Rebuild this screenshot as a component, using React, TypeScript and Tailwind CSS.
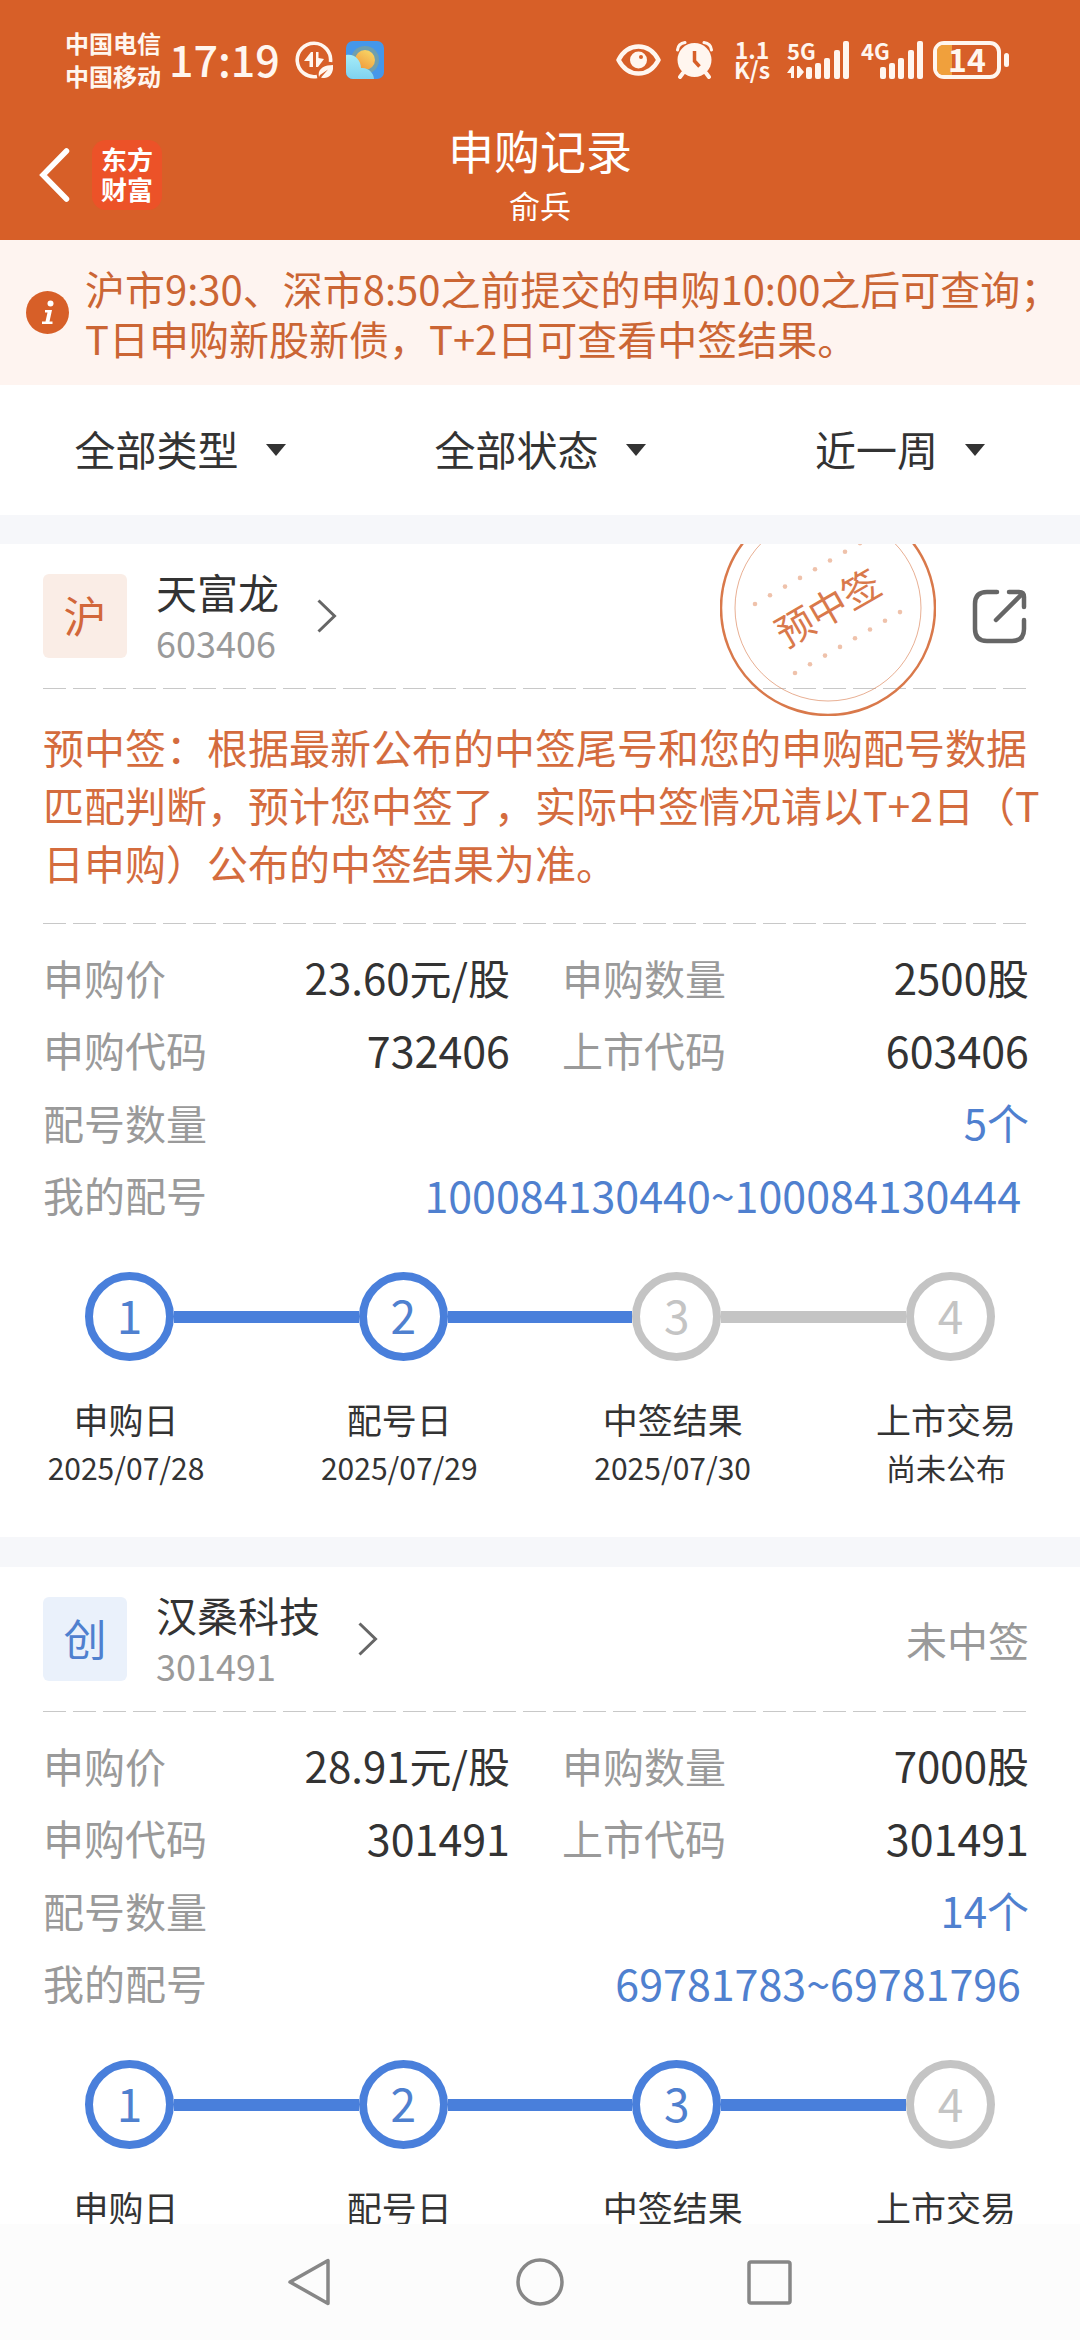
import type { ReactNode } from "react";

type Step = { label: string; date?: string; done: boolean };

type Record = {
  market: string;
  badgeClass: string;
  name: string;
  code: string;
  price: string;
  amount: string;
  applyCode: string;
  listCode: string;
  count: string;
  numbers: string;
  steps: Step[];
};

const tianfulong: Record = {
  market: "沪",
  badgeClass: "bg-[#faede6] text-[#d2673a]",
  name: "天富龙",
  code: "603406",
  price: "23.60元/股",
  amount: "2500股",
  applyCode: "732406",
  listCode: "603406",
  count: "5个",
  numbers: "100084130440~100084130444",
  steps: [
    { label: "申购日", date: "2025/07/28", done: true },
    { label: "配号日", date: "2025/07/29", done: true },
    { label: "中签结果", date: "2025/07/30", done: false },
    { label: "上市交易", date: "尚未公布", done: false },
  ],
};

const hansang: Record = {
  market: "创",
  badgeClass: "bg-[#eaf1fb] text-[#4f80cf]",
  name: "汉桑科技",
  code: "301491",
  price: "28.91元/股",
  amount: "7000股",
  applyCode: "301491",
  listCode: "301491",
  count: "14个",
  numbers: "69781783~69781796",
  steps: [
    { label: "申购日", done: true },
    { label: "配号日", done: true },
    { label: "中签结果", done: true },
    { label: "上市交易", done: false },
  ],
};

function Signal({ name, arrows }: { name: string; arrows?: boolean }) {
  return (
    <div className="relative h-[38px] w-[63px]">
      <span className="absolute -top-1 left-0 text-[22px] leading-[26px] font-bold">{name}</span>
      <svg className="h-[38px] w-[63px]" viewBox="0 0 63 38" fill="currentColor">
        <rect x="19" y="26" width="6" height="12" rx="2" />
        <rect x="28" y="22" width="6" height="16" rx="2" />
        <rect x="37" y="17" width="6" height="21" rx="2" />
        <rect x="47" y="9" width="6" height="29" rx="2" />
        <rect x="56" y="0" width="6" height="38" rx="2" />
        {arrows && <path d="M0 32L5 25H7V37H4V32ZM10 25H12L17 31L12 37H10Z" />}
      </svg>
    </div>
  );
}

function StatusBar() {
  return (
    <div className="flex h-30 items-center justify-between pr-[71px] pl-[65px] text-[#fff6ef]">
      <div className="flex items-center">
        <div className="pb-[3px] text-[24px] leading-[33px] font-bold">
          <div>中国电信</div>
          <div>中国移动</div>
        </div>
        <span className="ml-2 pb-1 text-[43px] leading-[48px] font-medium">17:19</span>
        {/* Data saver */}
        <svg className="ml-[15px] h-[38px] w-[38px]" viewBox="0 0 38 38" fill="none">
          <path d="M35.5 21A16.7 16.7 0 1 0 22 35.4" stroke="currentColor" strokeWidth="3.6" />
          <path d="M9 20L16 11H18V26H14.500V20ZM21 11H23.500V17L29 18L23 26H21Z" fill="currentColor" />
          <path d="M24 36C22 28 29 24 38 24C39 32 34 39 26 36.500L33 28.500L25 34Z" fill="currentColor" />
        </svg>
        {/* Weather */}
        <svg className="ml-[13px] h-[38px] w-[38px]" viewBox="0 0 38 38">
          <defs>
            <clipPath id="weather">
              <rect width="38" height="38" rx="7" />
            </clipPath>
            <linearGradient id="sun" x1="0.8" y1="0" x2="0.2" y2="1">
              <stop offset="0" stopColor="#f8d867" />
              <stop offset="1" stopColor="#f0963a" />
            </linearGradient>
            <linearGradient id="cloud" x1="0" y1="0" x2="0" y2="1">
              <stop offset="0" stopColor="#a5ecf8" />
              <stop offset="1" stopColor="#7fd2ef" />
            </linearGradient>
          </defs>
          <g clipPath="url(#weather)">
            <rect width="38" height="38" fill="#4597ea" />
            <circle cx="19" cy="19" r="14" fill="#6f9fae" />
            <circle cx="19" cy="19" r="10" fill="url(#sun)" />
            <path d="M0 14C8 12 15 19 15 27C22 26 28 32 28 38H0Z" fill="url(#cloud)" />
          </g>
        </svg>
      </div>

      <div className="flex items-center">
        {/* Eye comfort */}
        <svg className="h-[32px] w-[45px]" viewBox="0 0 45 32" fill="none">
          <path d="M2.500 16C12 -2 33 -2 42.500 16C33 34 12 34 2.500 16Z" stroke="currentColor" strokeWidth="4.500" strokeLinejoin="round" />
          <circle cx="22.500" cy="16" r="8.500" fill="currentColor" />
          <circle cx="25" cy="13" r="2" fill="#d75f28" />
        </svg>
        {/* Alarm */}
        <svg className="ml-[15px] h-[38px] w-[37px]" viewBox="0 0 37 38" fill="none" stroke="currentColor">
          <circle cx="18.500" cy="19" r="17" fill="currentColor" stroke="none" />
          <path d="M1.500 9C2 4 5 2 9 1.500M35.500 9C35 4 32 2 28 1.500" strokeWidth="3" strokeLinecap="round" />
          <path d="M7 32L4 36M30 32L33 36" strokeWidth="4" strokeLinecap="round" />
          <path d="M18.500 10V20L23.500 25.500" stroke="#d75f28" strokeWidth="3.500" />
        </svg>
        <div className="ml-[19px] w-[40px] pb-[3px] text-center text-[23px] leading-[20px] font-bold">
          <div>1.1</div>
          <div>K/s</div>
        </div>
        <div className="ml-[15px] flex gap-[11px]">
          <Signal name="5G" arrows />
          <Signal name="4G" />
        </div>
        {/* Battery */}
        <div className="ml-[9px] flex items-center gap-[3px]">
          <div className="relative h-[38px] w-[68px] rounded-[11px] border-4 border-current">
            <div className="h-full w-[15px] rounded-l-md bg-[#f0a03c]"></div>
            <span className="absolute inset-x-0 -top-[10px] text-center text-[32px] leading-[46px] font-bold">14</span>
          </div>
          <div className="h-[14px] w-[5px] rounded-sm bg-current"></div>
        </div>
      </div>
    </div>
  );
}

function TitleBar() {
  return (
    <div className="relative flex h-30 flex-col items-center text-white">
      <h1 className="text-[46px] leading-[58px]">申购记录</h1>
      <div className="text-[31px] leading-[54px]">俞兵</div>
      <div className="absolute inset-y-0 left-[39px] flex items-center gap-[22px] pb-[10px]">
        <button type="button" aria-label="返回">
          <svg className="h-[54px] w-[31px]" viewBox="0 0 31 54" fill="none" stroke="currentColor" strokeWidth="5.500" strokeLinecap="round">
            <path d="M27.500 3L4 27L27.500 51" />
          </svg>
        </button>
        <div className="flex h-[70px] w-[70px] flex-col items-center justify-center rounded-[14px] bg-[#ec5228] pb-[3px] text-[26px] leading-[30px] font-bold">
          <span>东方</span>
          <span>财富</span>
        </div>
      </div>
    </div>
  );
}

function Notice() {
  return (
    <div className="flex h-[145px] shrink-0 items-center bg-[#fef4f0] pl-[26px] text-[#cb6534]">
      <svg className="h-[43px] w-[43px] shrink-0" viewBox="0 0 43 43">
        <circle cx="21.500" cy="21.500" r="21.500" fill="#d75f28" />
        <circle cx="24.500" cy="12.500" r="3" fill="#fff" />
        <path d="M19 19H26L23.500 30.500H26.500V33H16V30.500H19.500L21.500 21.500H19Z" fill="#fff" />
      </svg>
      <p className="ml-4 text-[40px] leading-[50px]">
        沪市9:30、深市8:50之前提交的申购10:00之后可查询；
        <br />
        T日申购新股新债，T+2日可查看中签结果。
      </p>
    </div>
  );
}

function Filter({ id, label }: { id: string; label: string }) {
  return (
    <div className="flex items-center justify-center gap-[27px]">
      <select id={id} aria-label={label} className="appearance-none bg-transparent pb-1 text-[41px] leading-[60px] outline-none">
        <option>{label}</option>
      </select>
      <svg className="h-3 w-5" viewBox="0 0 20 12" fill="currentColor">
        <path d="M0 0H20L10 12Z" />
      </svg>
    </div>
  );
}

function Divider() {
  return <div className="h-px bg-[repeating-linear-gradient(90deg,#c8c8c8_0_23px,transparent_23px_30px)]"></div>;
}

function Stamp() {
  const dots = [0, 1, 2, 3, 4, 5, 6, 7];
  return (
    <div className="pointer-events-none absolute -top-[44px] right-[144px] flex h-[216px] w-[216px] items-center justify-center text-[#d9794b]">
      <svg className="absolute inset-0" viewBox="0 0 216 216" fill="none" stroke="currentColor">
        <circle cx="108" cy="108" r="107" strokeWidth="2.500" />
        <circle cx="108" cy="108" r="93" strokeWidth="1" opacity="0.6" />
        {dots.map((i) => (
          <g key={i} fill="#efc2ab" stroke="none">
            <circle cx={35 + i * 15} cy={104 - i * 8.7} r="2.300" />
            <circle cx={75 + i * 15} cy={173 - i * 8.7} r="2.300" />
          </g>
        ))}
      </svg>
      <span className="-rotate-30 pb-1 text-[38px] leading-[44px]">预中签</span>
    </div>
  );
}

function Row({ label, children }: { label: string; children: ReactNode }) {
  return (
    <div className="flex justify-between">
      <dt className="text-[41px] text-[#9a9a9a]">{label}</dt>
      <dd className="text-[42px]">{children}</dd>
    </div>
  );
}

function Steps({ steps }: { steps: Step[] }) {
  return (
    <div className="mt-[41px]">
      <div className="flex items-center pr-[34px] pl-[42px]">
        {steps.map((step, i) => (
          <div key={step.label} className={i > 0 ? "flex flex-1 items-center" : "flex items-center"}>
            {i > 0 && <div className={`h-3 flex-1 ${steps[i - 1].done ? "bg-[#497fdb]" : "bg-[#c4c4c4]"}`}></div>}
            <div
              className={`flex h-[89px] w-[89px] items-center justify-center rounded-full border-8 pb-[5px] text-[46px] leading-[64px] ${
                step.done ? "border-[#497fdb] text-[#4f80cf]" : "border-[#c4c4c4] text-[#c4c4c4]"
              }`}
            >
              {i + 1}
            </div>
          </div>
        ))}
      </div>
      <div className="mt-[33px] flex justify-between">
        {steps.map((step) => (
          <div key={step.label} className="w-[166px] text-center">
            <div className="text-[35px] leading-[50px]">{step.label}</div>
            <div className="text-[30px] leading-[46px]">{step.date}</div>
          </div>
        ))}
      </div>
    </div>
  );
}

function Card({ record, status, note }: { record: Record; status: ReactNode; note?: ReactNode }) {
  return (
    <section className="relative shrink-0 overflow-hidden bg-white pr-[51px] pb-[47px] pl-[43px]">
      <div className="flex h-36 items-center">
        <span className={`flex h-[84px] w-[84px] items-center justify-center rounded-md pb-1 text-[43px] leading-[60px] ${record.badgeClass}`}>
          {record.market}
        </span>
        <a href="#" className="ml-[29px] flex items-center">
          <div>
            <div className="text-[41px] leading-[52px]">{record.name}</div>
            <div className="text-[36px] leading-[50px] text-[#9a9a9a]">{record.code}</div>
          </div>
          <svg className="ml-[38px] h-[34px] w-[20px]" viewBox="0 0 20 34" fill="none" stroke="#666" strokeWidth="3">
            <path d="M1.500 1.500L17.500 17L1.500 32.500" />
          </svg>
        </a>
        <div className="ml-auto">{status}</div>
      </div>
      <Divider />
      {note}
      <dl className="grid grid-cols-2 gap-x-[52px] pt-[17px] leading-[72px]">
        <Row label="申购价">{record.price}</Row>
        <Row label="申购数量">{record.amount}</Row>
        <Row label="申购代码">
          <span className="text-[43px]">{record.applyCode}</span>
        </Row>
        <Row label="上市代码">
          <span className="text-[43px]">{record.listCode}</span>
        </Row>
        <div className="col-span-2 text-[#4f80cf]">
          <Row label="配号数量">{record.count}</Row>
          <Row label="我的配号">
            <span className="pr-2 text-[43px]">{record.numbers}</span>
          </Row>
        </div>
      </dl>
      <Steps steps={record.steps} />
    </section>
  );
}

export default function App() {
  return (
    <div className="flex h-screen flex-col overflow-hidden bg-[#f6f7fa] font-['Noto_Sans_CJK_SC',sans-serif] text-[#333]">
      <header className="shrink-0 bg-[#d75f28]">
        <StatusBar />
        <TitleBar />
      </header>

      <main className="flex min-h-0 flex-1 flex-col overflow-hidden">
        <Notice />
        <div className="grid h-[130px] shrink-0 grid-cols-3 bg-white">
          <Filter id="type" label="全部类型" />
          <Filter id="state" label="全部状态" />
          <Filter id="range" label="近一周" />
        </div>

        <div className="mt-[29px] flex flex-col gap-[30px]">
          <Card
            record={tianfulong}
            status={
              <>
                <Stamp />
                <button type="button" aria-label="分享" className="block pr-[2px]">
                  <svg className="h-[55px] w-[55px]" viewBox="0 0 55 55" fill="none" stroke="#666" strokeWidth="4.500" strokeLinecap="round" strokeLinejoin="round">
                    <path d="M25 3H15Q3 3 3 15V40Q3 52 15 52H40Q52 52 52 40V31" />
                    <path d="M37 3H47Q52 3 52 8V18M50 5L24 31" />
                  </svg>
                </button>
              </>
            }
            note={
              <>
                <p className="-mr-4 pt-[28px] pb-[32px] text-[41px] leading-[58px] text-[#d46c3e]">
                  预中签：根据最新公布的中签尾号和您的申购配号数据匹配判断，预计您中签了，实际中签情况请以T+2日（T日申购）公布的中签结果为准。
                </p>
                <Divider />
              </>
            }
          />
          <Card record={hansang} status={<span className="text-[41px] leading-[60px] text-[#9a9a9a]">未中签</span>} />
        </div>
      </main>

      {/* System navigation */}
      <nav className="flex h-[116px] shrink-0 items-center justify-center gap-[182px] bg-[#fcfcfc] text-[#878787]">
        <button type="button" aria-label="后退">
          <svg className="h-12 w-12" viewBox="0 0 48 48" fill="none" stroke="currentColor" strokeWidth="3.500" strokeLinejoin="round">
            <path d="M42 2.500V45.500L4 24Z" />
          </svg>
        </button>
        <button type="button" aria-label="主页">
          <svg className="h-12 w-12" viewBox="0 0 48 48" fill="none" stroke="currentColor" strokeWidth="3.500">
            <circle cx="24" cy="24" r="22" />
          </svg>
        </button>
        <button type="button" aria-label="最近任务">
          <svg className="h-12 w-12" viewBox="0 0 48 48" fill="none" stroke="currentColor" strokeWidth="3.500">
            <rect x="3" y="4" width="41" height="41" rx="2" />
          </svg>
        </button>
      </nav>
    </div>
  );
}
